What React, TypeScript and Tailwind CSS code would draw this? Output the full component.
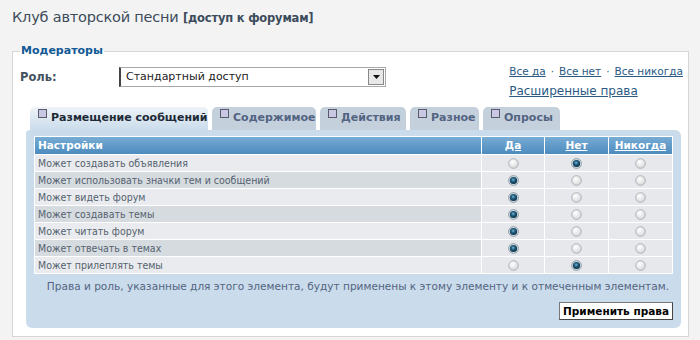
import React from "react";

const rows: { label: string; v: 0 | 1 | 2 }[] = [
  { label: "Может создавать объявления", v: 1 },
  { label: "Может использовать значки тем и сообщений", v: 0 },
  { label: "Может видеть форум", v: 0 },
  { label: "Может создавать темы", v: 0 },
  { label: "Может читать форум", v: 0 },
  { label: "Может отвечать в темах", v: 0 },
  { label: "Может прилеплять темы", v: 1 },
];

const tabs: { t: string; w: string }[] = [
  { t: "Размещение сообщений", w: "w-[178px]" },
  { t: "Содержимое", w: "w-[104px]" },
  { t: "Действия", w: "w-[86px]" },
  { t: "Разное", w: "w-[69px]" },
  { t: "Опросы", w: "w-[77px]" },
];

function Radio({ checked }: { checked: boolean }) {
  return (
    <svg width="11" height="11" viewBox="0 0 11 11">
      <defs>
        <radialGradient id="ru" cx="0.4" cy="0.35" r="0.7">
          <stop offset="0" stopColor="#ffffff" />
          <stop offset="1" stopColor="#d4d6d8" />
        </radialGradient>
        <radialGradient id="rc" cx="0.45" cy="0.4" r="0.6">
          <stop offset="0" stopColor="#7fb3d2" />
          <stop offset="0.45" stopColor="#1f5d80" />
          <stop offset="1" stopColor="#0b2d40" />
        </radialGradient>
      </defs>
      {checked ? (
        <>
          <circle cx="5.5" cy="5.5" r="5" fill="#c9d2d9" stroke="#8c9aa5" strokeWidth="0.8" />
          <circle cx="5.5" cy="5.5" r="3.6" fill="url(#rc)" />
        </>
      ) : (
        <circle cx="5.5" cy="5.5" r="4.8" fill="url(#ru)" stroke="#a9adb1" strokeWidth="0.9" />
      )}
    </svg>
  );
}

function TabBox() {
  return <span className="inline-block w-[9px] h-[9px] border border-[#5a5a6a] bg-[#c8c8e4] mr-[4px] relative top-[-3px]" />;
}

export default function App() {
  return (
    <div className="w-[700px] h-[340px] bg-[#f3f3f3] overflow-hidden font-['DejaVu_Sans',Verdana,sans-serif] text-[#536482]">
      <h1 className="pl-[12px] pt-[7px] h-[44px] text-[14.5px] leading-[20px] text-[#3c4b5b] tracking-[-0.2px]">
        Клуб авторской песни <span className="text-[11.5px] font-bold">[доступ к форумам]</span>
      </h1>
      <fieldset className="mx-[12px] w-[675px] h-[293px] border border-[#d6d6d6] bg-white px-[7px]">
        <legend className="text-[11px] font-bold text-[#115a96] px-[1px] leading-[14px]">Модераторы</legend>
        <div className="flex items-start h-[50px]">
          <div className="w-[99px] pt-[11px] text-[11.5px] font-bold text-[#425060]">Роль:</div>
          <div className="mt-[9px] flex h-[20px] w-[267px] border-l-2 border-l-[#444] border-y border-r border-[#a8a8a8] bg-white">
            <div className="flex-1 pl-[5px] text-[11px] leading-[18px] text-[#222]">Стандартный доступ</div>
            <div className="w-[16px] h-[16px] mt-[1px] mr-[1px] border border-[#888] bg-[#e8e8e8] flex items-center justify-center">
              <svg width="7" height="4" viewBox="0 0 7 4"><path d="M0 0h7L3.5 4z" fill="#111" /></svg>
            </div>
          </div>
          <div className="ml-auto pt-[5px] mr-[-2px] text-[10.5px] leading-[16px] text-[#2a5a84]">
            <div className="flex gap-[5px] whitespace-nowrap">
              <span className="underline">Все да</span><span>·</span>
              <span className="underline">Все нет</span><span>·</span>
              <span className="underline">Все никогда</span>
            </div>
            <div className="mt-[4px] text-[12px] underline text-[#2a5a84]">Расширенные права</div>
          </div>
        </div>
        <div className="flex items-end h-[22px] pl-[10px] gap-[4px]">
          {tabs.map((t, i) => (
            <div
              key={t.t}
              className={
                t.w +
                " h-[23px] rounded-t-[5px] pl-[8px] text-[11px] font-bold leading-[22px] whitespace-nowrap overflow-hidden " +
                (i === 0
                  ? "bg-gradient-to-b from-[#eef3f8] to-[#cadceb] text-[#1d2a36]"
                  : "bg-[#c4d0dc] text-[#536482]")
              }
            >
              <TabBox />
              {t.t}
            </div>
          ))}
        </div>
        <div className="ml-[6px] w-[655px] h-[198px] rounded-[6px] rounded-tl-[4px] bg-[#cadceb] pt-[6px] px-[8px]">
          <div className="bg-white p-px w-[639px]">
            <div className="grid grid-cols-[446px_62px_63px_63px] gap-px bg-white">
              <div className="h-[17px] bg-gradient-to-b from-[#77acd4] to-[#4c8bbe] pl-[3px] text-[10.5px] font-bold text-white leading-[17px]">Настройки</div>
              {["Да", "Нет", "Никогда"].map((h) => (
                <div key={h} className="h-[17px] bg-gradient-to-b from-[#77acd4] to-[#4c8bbe] text-center text-[10.5px] font-bold text-white underline leading-[17px]">{h}</div>
              ))}
              {rows.map((r, i) => (
                <React.Fragment key={r.label}>
                  <div className={"h-[16px] pl-[3px] font-['DejaVu_Sans_Condensed','DejaVu_Sans',sans-serif] text-[10.5px] leading-[16px] text-[#55626f] " + (i % 2 === 0 ? "bg-[#e9ebee]" : "bg-[#d6dbe0]")}>
                    {r.label}
                  </div>
                  {[0, 1, 2].map((c) => (
                    <div key={c} className="h-[16px] bg-[#e6e8eb] flex items-center justify-center">
                      <Radio checked={r.v === c} />
                    </div>
                  ))}
                </React.Fragment>
              ))}
            </div>
          </div>
          <div className="mt-[4px] text-right pr-[4px] text-[10.55px] leading-[16px] text-[#536482] whitespace-nowrap">
            Права и роль, указанные для этого элемента, будут применены к этому элементу и к отмеченным элементам.
          </div>
          <div className="flex justify-end mt-[8px]">
            <div className="h-[18px] px-[3px] border border-[#777] border-r-[#444] border-b-[#444] bg-white text-[10.5px] font-bold leading-[16px] text-black">
              Применить права
            </div>
          </div>
        </div>
      </fieldset>
    </div>
  );
}
